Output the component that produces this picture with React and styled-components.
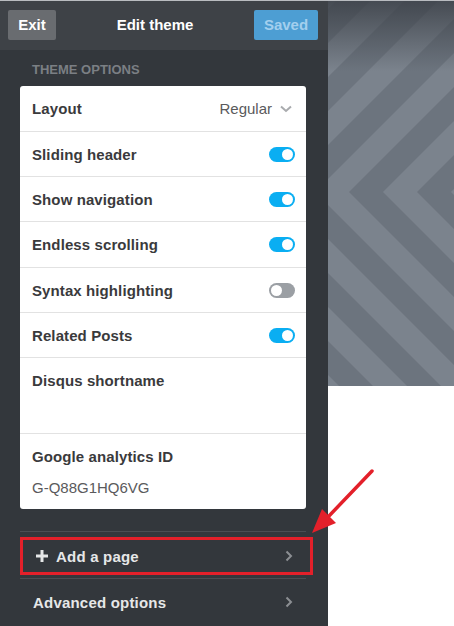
import React from 'react';
import styled, { createGlobalStyle } from 'styled-components';

const GlobalStyle = createGlobalStyle`
  html, body {
    margin: 0;
    padding: 0;
    background: #ffffff;
  }
  body {
    font-family: "Liberation Sans", Arial, sans-serif;
  }
`;

const Page = styled.div`
  position: relative;
  width: 454px;
  height: 626px;
  display: flex;
  border-top: 1px solid #b9bcc0;
  box-sizing: border-box;
  overflow: hidden;
`;

const Sidebar = styled.aside`
  width: 328px;
  flex-shrink: 0;
  background: #33373c;
  display: flex;
  flex-direction: column;
`;

const Header = styled.header`
  height: 49px;
  background: #3e4247;
  display: flex;
  align-items: center;
  padding: 0 10px 0 8px;
  box-sizing: border-box;
`;

const HeaderButton = styled.button`
  height: 30px;
  width: ${props => props.width}px;
  border: none;
  border-radius: 2px;
  background: ${props => props.primary ? '#4d9ed3' : '#696c70'};
  color: ${props => props.primary ? '#a3cfee' : '#ffffff'};
  font-family: inherit;
  font-size: 15px;
  font-weight: 700;
  padding: 0;
  margin-top: -2px;
`;

const Title = styled.h1`
  flex: 1;
  margin: -2px 0 0;
  text-align: center;
  color: #ffffff;
  font-size: 15px;
  font-weight: 700;
`;

const Body = styled.div`
  flex: 1;
  display: flex;
  flex-direction: column;
  padding: 12px 0 0 20px;
`;

const SectionLabel = styled.div`
  font-size: 13px;
  font-weight: 700;
  color: #7b7f84;
  padding-left: 12px;
  height: 15px;
  line-height: 15px;
  margin-bottom: 9px;
`;

const Card = styled.div`
  width: 286px;
  background: #ffffff;
  border-radius: 3px;
  display: flex;
  flex-direction: column;
`;

const Row = styled.div`
  height: ${props => props.height || 45}px;
  box-sizing: border-box;
  display: flex;
  flex-direction: ${props => props.tall ? 'column' : 'row'};
  align-items: ${props => props.tall ? 'flex-start' : 'center'};
  justify-content: ${props => props.tall ? 'flex-start' : 'space-between'};
  padding: ${props => props.tall ? '14px 11px 0 12px' : '0 11px 0 12px'};
  border-top: ${props => props.first ? 'none' : '1px solid #e2e2e2'};
`;

const Label = styled.span`
  font-size: 15px;
  font-weight: 700;
  color: #3a3a3c;
  letter-spacing: 0.1px;
`;

const Value = styled.span`
  font-size: 15px;
  color: #5a5a5c;
  margin-top: ${props => props.gap || 0}px;
`;

const Select = styled.div`
  display: flex;
  align-items: center;
  gap: 8px;
  margin-right: 3px;
`;

const Toggle = styled.div`
  position: relative;
  width: 26px;
  height: 15px;
  border-radius: 8px;
  background: ${props => props.on ? '#0aaef2' : '#9b9fa4'};

  &::after {
    content: '';
    position: absolute;
    top: 2px;
    left: ${props => props.on ? '13px' : '2px'};
    width: 11px;
    height: 11px;
    border-radius: 50%;
    background: #ffffff;
  }
`;

const NavList = styled.div`
  margin-top: 22px;
  width: 286px;
  display: flex;
  flex-direction: column;
`;

const NavRow = styled.div`
  height: 47px;
  box-sizing: border-box;
  border-top: 1px solid #4a4e53;
  display: flex;
  align-items: ${props => props.marked ? 'flex-start' : 'center'};
  padding-top: ${props => props.marked ? '5px' : '0'};
`;

const NavInner = styled.div`
  flex: ${props => props.marked ? 'none' : 1};
  width: ${props => props.marked ? '293px' : 'auto'};
  height: ${props => props.marked ? '38px' : 'auto'};
  box-sizing: border-box;
  border: ${props => props.marked ? '3px solid #e3202a' : 'none'};
  display: flex;
  align-items: center;
  justify-content: space-between;
  padding: ${props => props.marked ? '0 17px 0 13px' : '0 13px 0 13px'};
`;

const NavLabel = styled.span`
  display: flex;
  align-items: center;
  gap: 8px;
  color: #e6e7e8;
  font-size: 15px;
  font-weight: 700;
  letter-spacing: 0.2px;
`;

const Preview = styled.div`
  flex: 1;
  display: flex;
  flex-direction: column;
  background: #ffffff;
`;

const Pattern = styled.svg`
  display: block;
  width: 126px;
  height: 385px;
`;

const Annotation = styled.svg`
  position: absolute;
  left: 300px;
  top: 460px;
  width: 90px;
  height: 85px;
  pointer-events: none;
`;

const Chevron = () => (
  <svg width="8" height="12" viewBox="0 0 8 12">
    <path d="M1.5 1.5 L6 6 L1.5 10.5" fill="none" stroke="#8c8f93" strokeWidth="2" />
  </svg>
);

const ChevronDown = () => (
  <svg width="12" height="8" viewBox="0 0 12 8">
    <path d="M1 1.5 L6 6 L11 1.5" fill="none" stroke="#a9abae" strokeWidth="2" />
  </svg>
);

const Plus = () => (
  <svg width="12" height="12" viewBox="0 0 12 12">
    <path d="M6 0 V12 M0 6 H12" stroke="#e6e7e8" strokeWidth="3" />
  </svg>
);

const stripes = [-302, -234, -166, -98, -30, 38, 106, 174];

const ChevronPattern = () => (
  <Pattern viewBox="0 0 126 385">
    <defs>
      <linearGradient id="shade" x1="0" y1="0" x2="0" y2="1">
        <stop offset="0" stopColor="#3c4148" stopOpacity="0.85" />
        <stop offset="1" stopColor="#3c4148" stopOpacity="0" />
      </linearGradient>
    </defs>
    <rect width="126" height="385" fill="#7b838d" />
    {stripes.map(vx => (
      <polyline
        key={vx}
        points={`${vx + 260},-69 ${vx},191 ${vx + 260},451`}
        fill="none"
        stroke="#6c747e"
        strokeWidth="24"
        strokeLinejoin="miter"
        strokeMiterlimit="4"
      />
    ))}
    <rect width="126" height="70" fill="url(#shade)" />
  </Pattern>
);

const options = [
  { label: 'Sliding header', on: true },
  { label: 'Show navigation', on: true },
  { label: 'Endless scrolling', on: true, height: 46 },
  { label: 'Syntax highlighting', on: false },
  { label: 'Related Posts', on: true },
];

export default function App() {
  return (
    <>
      <GlobalStyle />
      <Page>
        <Sidebar>
          <Header>
            <HeaderButton width={48}>Exit</HeaderButton>
            <Title>Edit theme</Title>
            <HeaderButton width={64} primary>Saved</HeaderButton>
          </Header>
          <Body>
            <SectionLabel>THEME OPTIONS</SectionLabel>
            <Card>
              <Row first>
                <Label>Layout</Label>
                <Select>
                  <Value>Regular</Value>
                  <ChevronDown />
                </Select>
              </Row>
              {options.map(opt => (
                <Row key={opt.label} height={opt.height}>
                  <Label>{opt.label}</Label>
                  <Toggle on={opt.on} />
                </Row>
              ))}
              <Row tall height={76}>
                <Label>Disqus shortname</Label>
              </Row>
              <Row tall height={76}>
                <Label>Google analytics ID</Label>
                <Value gap={14}>G-Q88G1HQ6VG</Value>
              </Row>
            </Card>
            <NavList>
              <NavRow marked>
                <NavInner marked>
                  <NavLabel><Plus />Add a page</NavLabel>
                  <Chevron />
                </NavInner>
              </NavRow>
              <NavRow>
                <NavInner>
                  <NavLabel>Advanced options</NavLabel>
                  <Chevron />
                </NavInner>
              </NavRow>
            </NavList>
          </Body>
        </Sidebar>
        <Preview>
          <ChevronPattern />
        </Preview>
        <Annotation viewBox="0 0 90 85">
          <line x1="72" y1="10" x2="28" y2="56" stroke="#e3202a" strokeWidth="3.5" strokeLinecap="round" />
          <polygon points="12,72 22,48 36,62" fill="#e3202a" />
        </Annotation>
      </Page>
    </>
  );
}
